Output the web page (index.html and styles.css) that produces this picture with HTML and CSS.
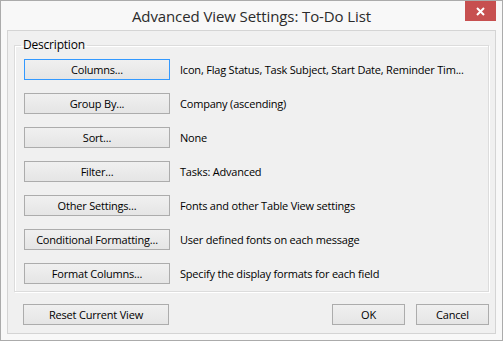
FILE: index.html
```html
<!DOCTYPE html>
<html lang="en">

<head>
    <meta charset="UTF-8">
    <title>Advanced View Settings: To-Do List</title>
    <link rel="stylesheet" href="styles.css">
</head>

<body>
    <div class="window">
        <div class="titlebar">
            <span class="title">Advanced View Settings: To-Do List</span>
            <span class="close">
                <svg width="9" height="9" viewBox="0 0 9 9">
                    <path d="M1 1 L8 8 M8 1 L1 8" stroke="#ffffff" stroke-width="2" fill="none"/>
                </svg>
            </span>
        </div>
        <div class="client">
            <fieldset class="group">
                <legend>Description</legend>
                <div class="row">
                    <button class="btn focused">Columns...</button>
                    <span class="desc">Icon, Flag Status, Task Subject, Start Date, Reminder Tim...</span>
                </div>
                <div class="row">
                    <button class="btn">Group By...</button>
                    <span class="desc">Company (ascending)</span>
                </div>
                <div class="row">
                    <button class="btn">Sort...</button>
                    <span class="desc">None</span>
                </div>
                <div class="row">
                    <button class="btn">Filter...</button>
                    <span class="desc">Tasks: Advanced</span>
                </div>
                <div class="row">
                    <button class="btn">Other Settings...</button>
                    <span class="desc">Fonts and other Table View settings</span>
                </div>
                <div class="row">
                    <button class="btn">Conditional Formatting...</button>
                    <span class="desc">User defined fonts on each message</span>
                </div>
                <div class="row">
                    <button class="btn">Format Columns...</button>
                    <span class="desc">Specify the display formats for each field</span>
                </div>
            </fieldset>
            <div class="footer">
                <button class="btn">Reset Current View</button>
                <div class="actions">
                    <button class="btn small">OK</button>
                    <button class="btn small">Cancel</button>
                </div>
            </div>
        </div>
    </div>
</body>

</html>
```

FILE: styles.css
```css
html,body {
    margin: 0;
    padding: 0;
}
body {
    width: 503px;
    height: 341px;
    font-family: 'Open Sans', 'Noto Sans', sans-serif;
    font-size: 11px;
    letter-spacing: -0.2px;
    color: #000000;
}
.window {
    position: relative;
    box-sizing: border-box;
    width: 503px;
    height: 341px;
    border: 1px solid #ababab;
    background-color: #f8f8f8;
    padding: 0 6px 6px 6px;
}
.titlebar {
    height: 29px;
    display: flex;
    align-items: center;
    justify-content: center;
}
.title {
    font-size: 15px;
    letter-spacing: -0.1px;
    color: #2b2b2b;
    margin-top: 1px;
}
.close {
    position: absolute;
    top: 0;
    right: 6px;
    width: 31px;
    height: 20px;
    background-color: #c75050;
    display: flex;
    align-items: center;
    justify-content: center;
}
.client {
    box-sizing: border-box;
    height: 304px;
    border: 1px solid #d4d4d4;
    background-color: #f0f0f0;
    padding: 6px 6px 0 6px;
}
.group {
    margin: 0;
    padding: 6px 0 7px 9px;
    border: 1px solid #dcdcdc;
    box-shadow: inset 1px 1px 0 #ffffff, 1px 1px 0 #ffffff;
    display: flex;
    flex-direction: column;
    gap: 13px;
}
.group legend {
    padding: 0 2px;
    margin-left: -3px;
    font-size: 12px;
    line-height: 16px;
}
.row {
    display: flex;
    align-items: center;
    gap: 10px;
}
.btn {
    box-sizing: border-box;
    width: 146px;
    height: 21px;
    margin: 0;
    padding: 0;
    border: 1px solid #acacac;
    background: linear-gradient(#f0f0f0, #e5e5e5);
    font-family: inherit;
    font-size: 11px;
    letter-spacing: -0.2px;
    color: #000000;
}
.btn.focused {
    border-color: #3399ff;
}
.btn.small {
    width: 73px;
}
.desc {
    white-space: nowrap;
}
.footer {
    display: flex;
    justify-content: space-between;
    margin-top: 12px;
    padding-left: 9px;
}
.actions {
    display: flex;
    gap: 11px;
}
```
